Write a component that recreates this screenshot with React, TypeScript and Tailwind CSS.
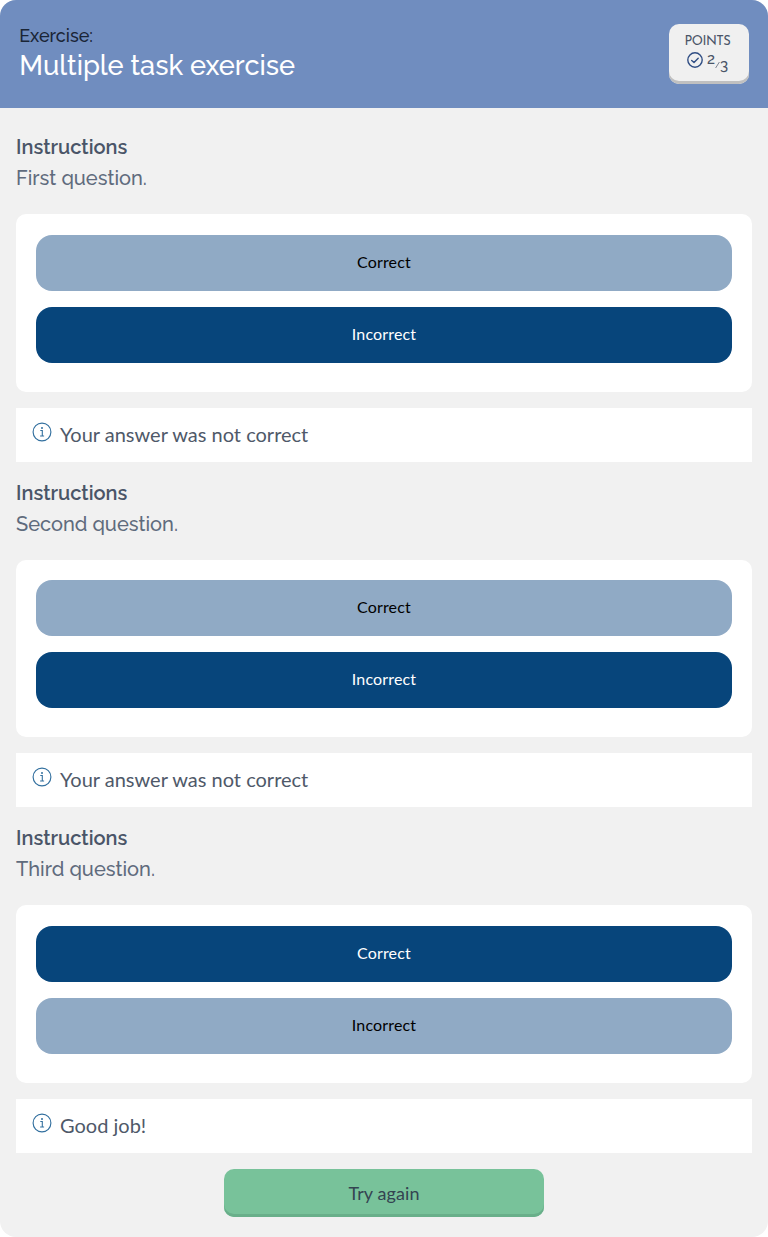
import React from "react";

const heading = "font-[Raleway,Lato,sans-serif]";

type Task = {
  question: string;
  selected: "Correct" | "Incorrect";
  feedback: string;
};

const tasks: Task[] = [
  { question: "First question.", selected: "Incorrect", feedback: "Your answer was not correct" },
  { question: "Second question.", selected: "Incorrect", feedback: "Your answer was not correct" },
  { question: "Third question.", selected: "Correct", feedback: "Good job!" },
];

function InfoIcon() {
  return (
    <svg className="mt-[14px] size-5 shrink-0" viewBox="0 0 20 20" fill="none" stroke="#33709f">
      <circle cx="10" cy="10" r="8.9" strokeWidth="1.15" />
      <path d="M8.3 8.5h2v5.2M8.1 14h4" strokeWidth="1.1" />
      <circle cx="10" cy="6" r="1" fill="#33709f" stroke="none" />
    </svg>
  );
}

function Choice({ label, active }: { label: string; active: boolean }) {
  return (
    <button
      className={`h-14 w-full rounded-[16px] pb-0.5 text-base tracking-[0.15px] ${
        active ? "bg-[#07457b] text-white" : "bg-[#90aac5] text-black"
      }`}
    >
      {label}
    </button>
  );
}

function TaskBlock({ task }: { task: Task }) {
  return (
    <section>
      <div className={`h-[98px] pt-4 text-xl leading-[31px] ${heading}`}>
        <h2 className="font-semibold text-[#4a5568]">Instructions</h2>
        <p className="font-medium text-[#5f6b7d]">{task.question}</p>
      </div>
      <div className="flex h-[177.5px] flex-col gap-4 rounded-[10px] bg-white px-5 pt-[20.5px]">
        <Choice label="Correct" active={task.selected === "Correct"} />
        <Choice label="Incorrect" active={task.selected === "Incorrect"} />
      </div>
      <div className="mt-4 flex h-[54px] gap-2 bg-white pl-4 text-xl text-[#4f5969]">
        <InfoIcon />
        <p className="leading-[52px]">{task.feedback}</p>
      </div>
    </section>
  );
}

export default function App() {
  return (
    <main className="h-[1237px] w-[768px] overflow-hidden rounded-[16px] bg-[#f1f1f1] font-[Lato,sans-serif]">
      <header className="flex h-[108px] justify-between bg-[#708dbf] pt-6 pr-[19px] pl-[19.2px]">
        <div className={`font-medium ${heading}`}>
          <p className="text-lg leading-6 text-[#1a2536]">Exercise:</p>
          <h1 className="text-[27.2px] leading-[34px] text-white">Multiple task exercise</h1>
        </div>
        <div className="flex h-[60px] w-20 flex-col items-center rounded-[10px] bg-[#f0f0f0] pt-[10px] text-[#4a5568] shadow-[inset_0_-3px_0_#c0c0c0]">
          <span className="-ml-[3px] font-['Josefin_Sans',Lato,sans-serif] text-[13px] leading-[15px] tracking-[-0.5px]">POINTS</span>
          <div className={`flex h-6 w-[44px] items-start font-medium ${heading}`}>
            <svg className="mt-[3px] size-4 shrink-0" viewBox="0 0 16 16" fill="none" stroke="#304e84" strokeWidth="1.4" strokeLinecap="round" strokeLinejoin="round">
              <circle cx="8" cy="8" r="7.2" />
              <path d="m4.7 8.4 2.3 2.1 4.2-4.3" />
            </svg>
            <span className="ml-1 text-[15px] leading-[21px]">2</span>
            <svg className="mt-[12px] h-2 w-[5px] shrink-0" viewBox="0 0 5 8" fill="none" stroke="#4a5568" strokeWidth="0.7">
              <path d="M0.6 7 4.4 1" />
            </svg>
            <span className="mt-[7px] text-[15px] leading-[19px]">3</span>
          </div>
        </div>
      </header>
      <div className="px-4 pt-[8.25px]">
        {tasks.map((task) => (
          <TaskBlock key={task.question} task={task} />
        ))}
        <button className="mx-auto mt-4 block h-12 w-80 rounded-[10px] bg-[#78c29a] text-lg tracking-[0.1px] text-[#344451] shadow-[inset_0_-3px_0_#69af8a]">
          Try again
        </button>
      </div>
    </main>
  );
}
